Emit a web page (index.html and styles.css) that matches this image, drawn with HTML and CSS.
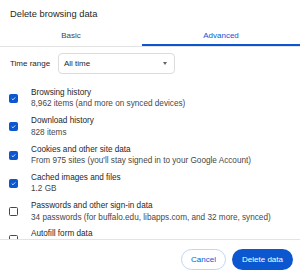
FILE: index.html
```html
<!DOCTYPE html>
<html>
<head>
<meta charset="utf-8">
<link rel="stylesheet" href="styles.css">
</head>
<body>
<div class="dialog">
  <div class="title">Delete browsing data</div>
  <div class="tabs">
    <div class="tab tab-basic">Basic</div>
    <div class="tab tab-adv active">Advanced</div>
  </div>
  <div class="range">
    <span class="range-label">Time range</span>
    <div class="select"><span>All time</span><span class="caret"></span></div>
  </div>
  <div class="list">
    <div class="row">
      <span class="cb on"><svg viewBox="0 0 10 10"><path d="M2.5 5.2 L4.3 6.9 L7.5 3.4" fill="none" stroke="#fff" stroke-width="1.1"/></svg></span>
      <div class="txt"><div class="t1">Browsing history</div><div class="t2">8,962 items (and more on synced devices)</div></div>
    </div>
    <div class="row">
      <span class="cb on"><svg viewBox="0 0 10 10"><path d="M2.5 5.2 L4.3 6.9 L7.5 3.4" fill="none" stroke="#fff" stroke-width="1.1"/></svg></span>
      <div class="txt"><div class="t1">Download history</div><div class="t2">828 items</div></div>
    </div>
    <div class="row">
      <span class="cb on"><svg viewBox="0 0 10 10"><path d="M2.5 5.2 L4.3 6.9 L7.5 3.4" fill="none" stroke="#fff" stroke-width="1.1"/></svg></span>
      <div class="txt"><div class="t1">Cookies and other site data</div><div class="t2">From 975 sites (you'll stay signed in to your Google Account)</div></div>
    </div>
    <div class="row">
      <span class="cb on"><svg viewBox="0 0 10 10"><path d="M2.5 5.2 L4.3 6.9 L7.5 3.4" fill="none" stroke="#fff" stroke-width="1.1"/></svg></span>
      <div class="txt"><div class="t1">Cached images and files</div><div class="t2">1.2 GB</div></div>
    </div>
    <div class="row">
      <span class="cb"></span>
      <div class="txt"><div class="t1">Passwords and other sign-in data</div><div class="t2">34 passwords (for buffalo.edu, libapps.com, and 32 more, synced)</div></div>
    </div>
    <div class="row">
      <span class="cb"></span>
      <div class="txt"><div class="t1">Autofill form data</div><div class="t2">&nbsp;</div></div>
    </div>
  </div>
  <div class="footer">
    <button class="btn cancel">Cancel</button>
    <button class="btn primary">Delete data</button>
  </div>
</div>
</body>
</html>
```
FILE: styles.css
```css
html, body { margin: 0; padding: 0; background: #fff; }
body { font-family: "Liberation Sans", Arial, sans-serif; color: #1f1f1f; }
.dialog { width: 300px; height: 278px; overflow: hidden; display: flex; flex-direction: column; }
.title { font-size: 9.3px; line-height: 12px; padding: 8px 0 0 10px; height: 18px; flex: none; }
.tabs { display: flex; border-bottom: 1px solid #e3e3e3; height: 20px; flex: none; }
.tab { font-size: 8px; line-height: 20px; text-align: center; color: #444746; }
.tab-basic { width: 142px; }
.tab-adv { flex: 1; }
.tab.active { color: #0b57d0; box-shadow: inset 0 -2px 0 #0b57d0; }
.range { display: flex; align-items: center; padding: 6px 0 0 10px; height: 21px; flex: none; }
.range-label { font-size: 8px; width: 48px; color: #1f1f1f; }
.select { width: 103px; height: 19px; border: 1px solid #dadce0; border-radius: 4px; display: flex; align-items: center; justify-content: space-between; padding: 0 7px 0 5px; font-size: 8px; }
.caret { width: 0; height: 0; border-left: 2.5px solid transparent; border-right: 2.5px solid transparent; border-top: 3px solid #5f6368; }
.list { height: 166px; flex: none; overflow: hidden; padding-top: 10.3px; box-sizing: border-box; border-bottom: 1px solid #e3e3e3; }
.row { display: flex; align-items: center; height: 28.3px; flex: none; }
.cb { width: 9px; height: 9px; margin: 0 13px 0 9px; border: 1px solid #474747; border-radius: 1.5px; box-sizing: border-box; display: flex; flex: none; }
.cb.on { background: #0b57d0; border-color: #0b57d0; }
.cb svg { width: 100%; height: 100%; }
.txt { font-size: 8.2px; line-height: 11.5px; white-space: nowrap; }
.t1 { color: #1f1f1f; }
.t2 { color: #474747; }
.footer { display: flex; justify-content: flex-end; gap: 6px; padding: 9px 7px 0 0; }
.btn { font-family: "Liberation Sans", Arial, sans-serif; font-size: 8px; height: 21px; border-radius: 11px; padding: 0; }
.cancel { width: 45px; background: #fff; color: #0b57d0; border: 1px solid #c2d5f5; }
.primary { width: 61px; background: #0b57d0; color: #fff; border: none; }
```
